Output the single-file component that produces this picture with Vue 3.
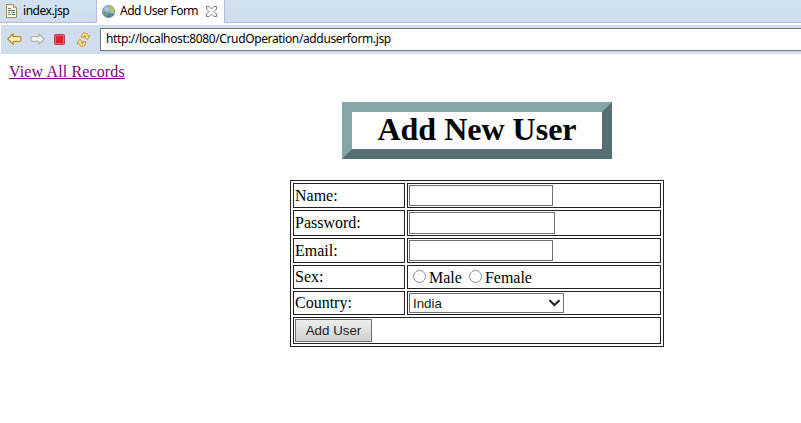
<script setup>
import { ref } from 'vue'
const sex = ref('')
const fields = [
  { label: 'Name:', type: 'text', cls: 'name' },
  { label: 'Password:', type: 'password', cls: 'password' },
  { label: 'Email:', type: 'email', cls: 'email' },
]
</script>

<template>
  <div class="browser">
    <div class="tabs">
      <div class="tab idle">
        <svg class="file" width="12" height="14" viewBox="0 0 12 14">
          <path d="M.5.5h7l3 3v10H.5z" fill="#fffdf0" stroke="#a08a58" />
          <path d="M7.500.5v3h3" fill="#f3dfa6" stroke="#b29a62" />
          <path d="M2 4.500h3M2 8.500h2" stroke="#d65a4a" />
          <path d="M2 6.500h4M6 10.500h3M6 6.500h3" stroke="#3f6fb5" />
          <path d="M5 8.500h4M2 10.500h3" stroke="#4c9865" />
        </svg>
        <span class="t1">index.jsp</span>
      </div>
      <div class="tab active">
        <svg class="globe" width="14" height="14" viewBox="0 0 14 14">
          <defs>
            <radialGradient id="sea" cx=".35" cy=".3" r=".8">
              <stop offset="0" stop-color="#b8d9ec" />
              <stop offset=".5" stop-color="#5b9bca" />
              <stop offset="1" stop-color="#245789" />
            </radialGradient>
          </defs>
          <circle cx="6.500" cy="6.500" r="6.200" fill="url(#sea)" stroke="#6f93ad" stroke-width=".6" />
          <path d="M6.500 1.500l3-.2 2.300 2.200.6 3.500-1.500 2-2-.5L7 5.500 5.500 4z" fill="#b9bf72" />
          <path d="M1.500 6l3 1.500 1.500 2-1 3L2.500 10.500z" fill="#6f9f62" />
          <path d="M8 10l2-.3-.8 1.500-1.700.7z" fill="#83a66b" />
        </svg>
        <span class="t2">Add User Form</span>
        <svg class="close" width="11" height="11" viewBox="0 0 11 11">
          <path d="M.5.5h2.500l2.500 2.500L8 .5h2.500V3L8 5.500 10.500 8v2.500H8L5.500 8 3 10.500H.5V8L3 5.500.5 3z" fill="#fff" stroke="#6c6c6c" stroke-width=".9" />
        </svg>
      </div>
      <div class="rest"></div>
    </div>
    <div class="toolbar">
      <svg class="nav back" width="15" height="12" viewBox="0 0 15 12">
        <path d="M.8 6L6.300.8v2.900h6.200q1.500 0 1.500 1.300v2q0 1.300-1.500 1.300H6.300v2.900z" fill="#fff4c4" stroke="#bd8a26" stroke-width="1.200" stroke-linejoin="round" />
      </svg>
      <svg class="nav fwd" width="15" height="12" viewBox="0 0 15 12">
        <path d="M14.200 6L8.700.8v2.900H2.500Q1 3.700 1 5v2q0 1.300 1.500 1.300h6.200v2.900z" fill="#f2f2f0" stroke="#b4b4b4" stroke-width="1.200" stroke-linejoin="round" />
      </svg>
      <svg class="nav stop" width="11" height="11" viewBox="0 0 11 11">
        <rect x=".5" y=".5" width="10" height="10" rx=".8" fill="#e8606a" stroke="#c83a43" />
        <rect x="2" y="2" width="7" height="7" fill="#dc2030" />
      </svg>
      <svg class="nav refresh" width="15" height="15" viewBox="0 0 15 15">
        <g fill="#fbe190" stroke="#c08a28" stroke-width=".9" stroke-linejoin="round">
          <path d="M5.500 5.500Q4.800.8 8.800.8q3 0 3.700 3H14.200L11.200 7.600 7.800 4.300l2 0Q8.200 2.400 8 5z" />
          <path d="M9.500 9.500Q10.200 14.200 6.200 14.200q-3 0-3.700-3H.8L3.800 7.400 7.200 10.700l-2 0Q6.800 12.600 7 10z" />
        </g>
      </svg>
      <div class="url"><span class="t3">http://localhost:8080/CrudOperation/adduserform.jsp</span></div>
    </div>
    <main class="page">
      <a class="link">View All Records</a>
      <h1 class="title"><span>Add New User</span></h1>
      <form class="grid" @submit.prevent>
        <template v-for="f in fields" :key="f.label">
          <label class="cell">{{ f.label }}</label>
          <div class="cell"><input class="field" :class="f.cls" :type="f.type" /></div>
        </template>
        <span class="cell">Sex:</span>
        <div class="cell choices">
          <input v-model="sex" class="radio" type="radio" value="male" /><span class="male">Male</span>
          <input v-model="sex" class="radio" type="radio" value="female" /><span>Female</span>
        </div>
        <span class="cell">Country:</span>
        <div class="cell">
          <div class="select">
            <span>India</span>
            <svg width="13" height="8" viewBox="0 0 13 8"><path d="M1.500 1.200L6.500 6l5-4.800" fill="none" stroke="#222" stroke-width="2.100" /></svg>
          </div>
        </div>
        <div class="cell wide"><button class="submit">Add User</button></div>
      </form>
    </main>
  </div>
</template>

<style>
body { background: #fff; }
</style>

<style scoped>
* { box-sizing: border-box; }
.browser { width: 801px; height: 423px; overflow: hidden; background: #fff; color: #000; }
svg { display: block; flex: none; }
.tabs { display: flex; height: 23px; font: 12px/22px "Noto Sans", sans-serif; white-space: nowrap; }
.tab { display: flex; align-items: flex-start; }
.idle { width: 97px; padding-left: 6px; background: linear-gradient(#d3e2f0, #cddded); border-right: 1px solid #b4bbd3; border-bottom: 1px solid #b4bbd3; border-bottom-right-radius: 2px; }
.file { margin-top: 4px; }
.t1 { margin-left: 5px; letter-spacing: -0.45px; }
.active { width: 127px; padding-left: 5px; background: #fff; }
.globe { margin-top: 5px; }
.t2 { flex: none; margin-left: 4px; width: 79px; letter-spacing: -0.5px; }
.close { margin: 6px 0 0 7px; }
.rest { flex: 1; background: linear-gradient(#d1e1ef, #cddded); border-left: 1px solid #b4bbd3; border-bottom: 1px solid #b4bbd3; }
.toolbar { display: flex; height: 29px; margin: 2px 0 0 1px; background: #cfdded; }
.back { margin: 8px 0 0 6px; }
.fwd { margin: 8px 0 0 8px; }
.stop { margin: 9px 0 0 9px; }
.refresh { margin: 7px 0 0 11px; }
.url { flex: 1; margin: 3px 0 0 9px; height: 23px; padding-left: 5px; border: 1px solid #777; border-right: 0; background: #fff; font: 12px/20px "Noto Sans", sans-serif; letter-spacing: -0.37px; white-space: nowrap; }
.page { font: 16px/18px "Liberation Serif", serif; }
.link { display: block; width: fit-content; margin: 9px 0 0 9px; color: #800080; text-decoration: underline; letter-spacing: 0.13px; }
.title { width: 270px; height: 57px; margin: 21px 0 0 342px; border: 10px solid; border-color: #84a7aa #586e72 #586e72 #84a7aa; font: bold 32px/36px "Liberation Serif", serif; text-align: center; white-space: nowrap; }
.title span { display: block; margin-top: -1px; }
.grid { display: grid; width: 374px; margin: 21px 0 0 290px; padding: 2px; gap: 2px; border: 1px solid #222; grid-template-columns: 112px 254px; grid-template-rows: 25px 26px 25px 24px 24px 27px; }
.cell { display: flex; align-items: center; padding: 1px; border: 1px solid #222; }
.wide { grid-column: span 2; }
.field { width: 144px; height: 21px; margin: 0; padding: 0 2px; border: 1px solid #707070; border-radius: 0; background: #fff; outline: 0; }
.password { width: 146px; height: 22px; }
.radio { appearance: none; flex: none; width: 13px; height: 13px; margin: -1px 3px 0 4px; border: 1px solid #8c8c8c; border-radius: 50%; background: #fff; }
.choices span { padding-top: 1px; }
.male { margin-right: 3px; }
.select { display: flex; align-items: center; justify-content: space-between; width: 155px; height: 20px; padding: 0 2px 0 3px; border: 1px solid #707070; font: 13.33px/18px "Liberation Sans", sans-serif; color: #222; }
.select span { padding-top: 1px; }
.submit { width: 77px; height: 23px; padding: 0; border: 1px solid #707070; border-radius: 0; background: linear-gradient(#ededed, #d0d0d0); color: #222; font: 13.33px/20px "Liberation Sans", sans-serif; }
</style>
